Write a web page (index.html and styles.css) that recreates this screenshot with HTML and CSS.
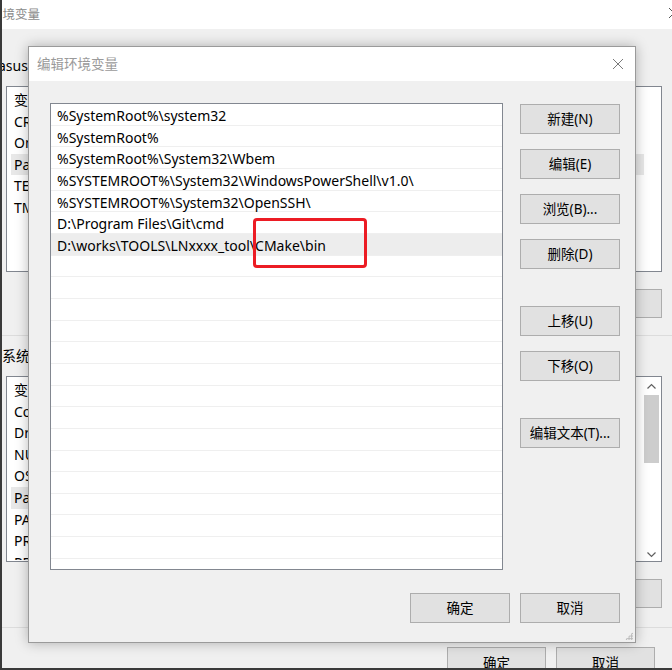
FILE: index.html
```html
<!DOCTYPE html>
<html lang="zh-CN">
<head>
<meta charset="utf-8">
<title>编辑环境变量</title>
<link rel="stylesheet" href="styles.css">
</head>
<body>
<div class="bgwin">
  <div class="bg-title">
    <span class="bg-title-text">环境变量</span>
    <svg class="bg-close" width="12" height="12" viewBox="0 0 12 12"><path d="M1 1 L11 11 M11 1 L1 11" stroke="#555" stroke-width="1" fill="none"/></svg>
  </div>
  <div class="bg-content">
    <div class="bg-label">asus 的用户变量(U)</div>
    <div class="bg-list">
      <div class="bg-row">变量</div>
      <div class="bg-row">CREATE_PATH</div>
      <div class="bg-row">OneDrive</div>
      <div class="bg-row sel">Path</div>
      <div class="bg-row">TEMP</div>
      <div class="bg-row">TMP</div>
    </div>
    <div class="bg-btns">
      <div class="bg-btn">新建(N)...</div>
      <div class="bg-btn">编辑(E)...</div>
      <div class="bg-btn last">删除(D)</div>
    </div>
    <div class="bg-sep"></div>
    <div class="bg-label sys">系统变量(S)</div>
    <div class="bg-list sys-list">
      <div class="bg-rows">
        <div class="bg-row">变量</div>
        <div class="bg-row">ComSpec</div>
        <div class="bg-row">DriverData</div>
        <div class="bg-row">NUMBER_OF_PROCESSORS</div>
        <div class="bg-row">OS</div>
        <div class="bg-row sel">Path</div>
        <div class="bg-row">PATHEXT</div>
        <div class="bg-row">PROCESSOR_ARCHITECTURE</div>
        <div class="bg-row">PROCESSOR_IDENTIFIER</div>
      </div>
      <div class="vscroll">
        <svg width="17" height="12" viewBox="0 0 17 12"><path d="M4.5 7.5 L8.5 3.5 L12.5 7.5" stroke="#606060" stroke-width="1.2" fill="none"/></svg>
        <div class="thumb"></div>
        <div class="track"></div>
        <svg width="17" height="12" viewBox="0 0 17 12"><path d="M4.5 4.5 L8.5 8.5 L12.5 4.5" stroke="#606060" stroke-width="1.2" fill="none"/></svg>
      </div>
    </div>
    <div class="bg-btns">
      <div class="bg-btn">新建(W)...</div>
      <div class="bg-btn">编辑(I)...</div>
      <div class="bg-btn last">删除(L)</div>
    </div>
    <div class="bg-sep second"></div>
    <div class="bg-foot">
      <div class="bg-btn wide">确定</div>
      <div class="bg-btn wide">取消</div>
    </div>
  </div>
</div>

<div class="dialog">
  <div class="dlg-title">
    <span>编辑环境变量</span>
    <svg class="dlg-close" width="12" height="12" viewBox="0 0 12 12"><path d="M1 1 L11 11 M11 1 L1 11" stroke="#7a7a7a" stroke-width="1" fill="none"/></svg>
  </div>
  <div class="dlg-body">
    <div class="dlg-main">
      <div class="plist">
        <div class="prow">%SystemRoot%\system32</div>
        <div class="prow">%SystemRoot%</div>
        <div class="prow">%SystemRoot%\System32\Wbem</div>
        <div class="prow">%SYSTEMROOT%\System32\WindowsPowerShell\v1.0\</div>
        <div class="prow">%SYSTEMROOT%\System32\OpenSSH\</div>
        <div class="prow">D:\Program Files\Git\cmd</div>
        <div class="prow hl">D:\works\TOOLS\LNxxxx_tool\CMake\bin</div>
        <div class="prow"></div>
        <div class="prow"></div>
        <div class="prow"></div>
        <div class="prow"></div>
        <div class="prow"></div>
        <div class="prow"></div>
        <div class="prow"></div>
        <div class="prow"></div>
        <div class="prow"></div>
        <div class="prow"></div>
        <div class="prow"></div>
        <div class="prow"></div>
        <div class="prow"></div>
        <div class="prow"></div>
        <div class="prow"></div>
        <div class="mark"></div>
      </div>
      <div class="btncol">
        <div class="btn">新建(N)</div>
        <div class="btn">编辑(E)</div>
        <div class="btn">浏览(B)...</div>
        <div class="btn">删除(D)</div>
        <div class="btn gap">上移(U)</div>
        <div class="btn">下移(O)</div>
        <div class="btn gap">编辑文本(T)...</div>
      </div>
    </div>
    <div class="dlg-foot">
      <div class="btn">确定</div>
      <div class="btn">取消</div>
    </div>
    <div class="grip"></div>
  </div>
</div>
</body>
</html>
```

FILE: styles.css
```css
* { box-sizing: border-box; }
html, body {
  margin: 0;
  padding: 0;
}
body {
  width: 672px;
  height: 670px;
  overflow: hidden;
  background: #3a3a3a;
  position: relative;
  font-family: "Noto Sans", "Noto Sans CJK SC", sans-serif;
  font-size: 14px;
  color: #000;
}

/* ---------- background window ---------- */
.bgwin {
  margin-left: 2px;
  width: 670px;
  height: 668px;
  background: #f0f0f0;
  overflow: hidden;
}
.bg-title {
  height: 29px;
  background: #fff;
  display: flex;
  align-items: center;
  justify-content: space-between;
  padding-bottom: 3px;
}
.bg-title-text {
  margin-left: -12px;
  font-size: 12.5px;
  color: #8a8a8a;
  font-family: "Noto Sans CJK SC", sans-serif;
}
.bg-close { margin-right: -8px; }
.bg-content {
  padding: 0 10px 0 4px;
}
.bg-label {
  margin-top: 27px;
  margin-left: -8px;
  height: 19px;
  line-height: 19px;
  white-space: nowrap;
}
.bg-label.sys {
  margin-top: 10px;
  margin-left: -4px;
}
.bg-list {
  margin-top: 11px;
  height: 186px;
  background: #fff;
  border: 1px solid #828790;
  padding: 2px 0 0 4px;
  overflow: hidden;
}
.bg-row {
  height: 21.6px;
  line-height: 21.6px;
  padding-left: 3px;
  white-space: nowrap;
}
.bg-row.sel { background: #e8e8e8; margin-right: 17px; }
.sys-list {
  display: flex;
  padding: 2px 1px 1px 4px;
}
.bg-rows { flex: 1; overflow: hidden; }
.vscroll {
  width: 17px;
  display: flex;
  flex-direction: column;
  margin-top: -1px;
}
.vscroll svg { display: block; height: 12px; flex: none; margin-top: 3px; }
.thumb {
  margin: 2px 1px 0;
  height: 68px;
  background: #cdcdcd;
}
.track { flex: 1; }
.bg-btns {
  margin-top: 17px;
  display: flex;
  justify-content: flex-end;
  gap: 8px;
}
.bg-btn {
  width: 75px;
  height: 29px;
  background: #e1e1e1;
  border: 1px solid #adadad;
  display: flex;
  align-items: center;
  justify-content: center;
  white-space: nowrap;
  font-size: 13.5px;
  padding-bottom: 2px;
}
.bg-btn.last { width: 110px; }
.bg-sep {
  margin: 17px -10px 0 -4px;
  border-top: 1px solid #dcdcdc;
}
.bg-sep.second { margin-top: 19px; }
.bg-foot {
  margin-top: 19px;
  display: flex;
  justify-content: flex-end;
  gap: 10px;
  padding-right: 7px;
}
.bg-btn.wide { width: 99px; height: 30px; padding-bottom: 0; }

/* ---------- edit dialog ---------- */
.dialog {
  position: absolute;
  left: 28px;
  top: 46px;
  width: 608px;
  height: 597px;
  background: #f0f0f0;
  border: 1px solid #9a9a9a;
  box-shadow: 0 0 12px rgba(0, 0, 0, 0.28);
  display: flex;
  flex-direction: column;
}
.dlg-title {
  height: 34px;
  background: #fff;
  display: flex;
  align-items: center;
  justify-content: space-between;
  padding: 0 11px 3px 8px;
  font-family: "Noto Sans CJK SC", sans-serif;
  color: #9a9a9a;
  font-size: 13.5px;
}
.dlg-close { margin-top: 2px; }
.dlg-body {
  flex: 1;
  position: relative;
  padding: 22px 15px 19px 21px;
  display: flex;
  flex-direction: column;
}
.dlg-main {
  display: flex;
  gap: 17px;
}
.plist {
  position: relative;
  width: 453px;
  height: 467px;
  background: #fff;
  border: 1px solid #828790;
  overflow: hidden;
}
.prow {
  height: 21.67px;
  padding: 3px 0 0 6px;
  line-height: 17px;
  border-bottom: 1px solid #efefef;
  white-space: nowrap;
}
.prow.hl { background: #ededed; }
.mark {
  position: absolute;
  left: 202px;
  top: 114px;
  width: 114px;
  height: 50px;
  border: 3px solid #ec1c24;
  border-radius: 4px;
}
.btncol {
  display: flex;
  flex-direction: column;
  gap: 15px;
  padding-top: 1px;
}
.btn {
  width: 100px;
  height: 30px;
  background: #e1e1e1;
  border: 1px solid #adadad;
  display: flex;
  align-items: center;
  justify-content: center;
  white-space: nowrap;
  font-size: 13.5px;
  padding-bottom: 3px;
}
.btn.gap { margin-top: 22px; }
.dlg-foot {
  margin-top: 23px;
  display: flex;
  justify-content: flex-end;
  gap: 10px;
}
.grip {
  position: absolute;
  right: 2px;
  bottom: 2px;
  width: 8px;
  height: 8px;
  background:
    radial-gradient(circle, #b5b5b5 0.9px, transparent 1.1px) 0 0 / 2.7px 2.7px;
  clip-path: polygon(100% 0, 100% 100%, 0 100%);
}
```
